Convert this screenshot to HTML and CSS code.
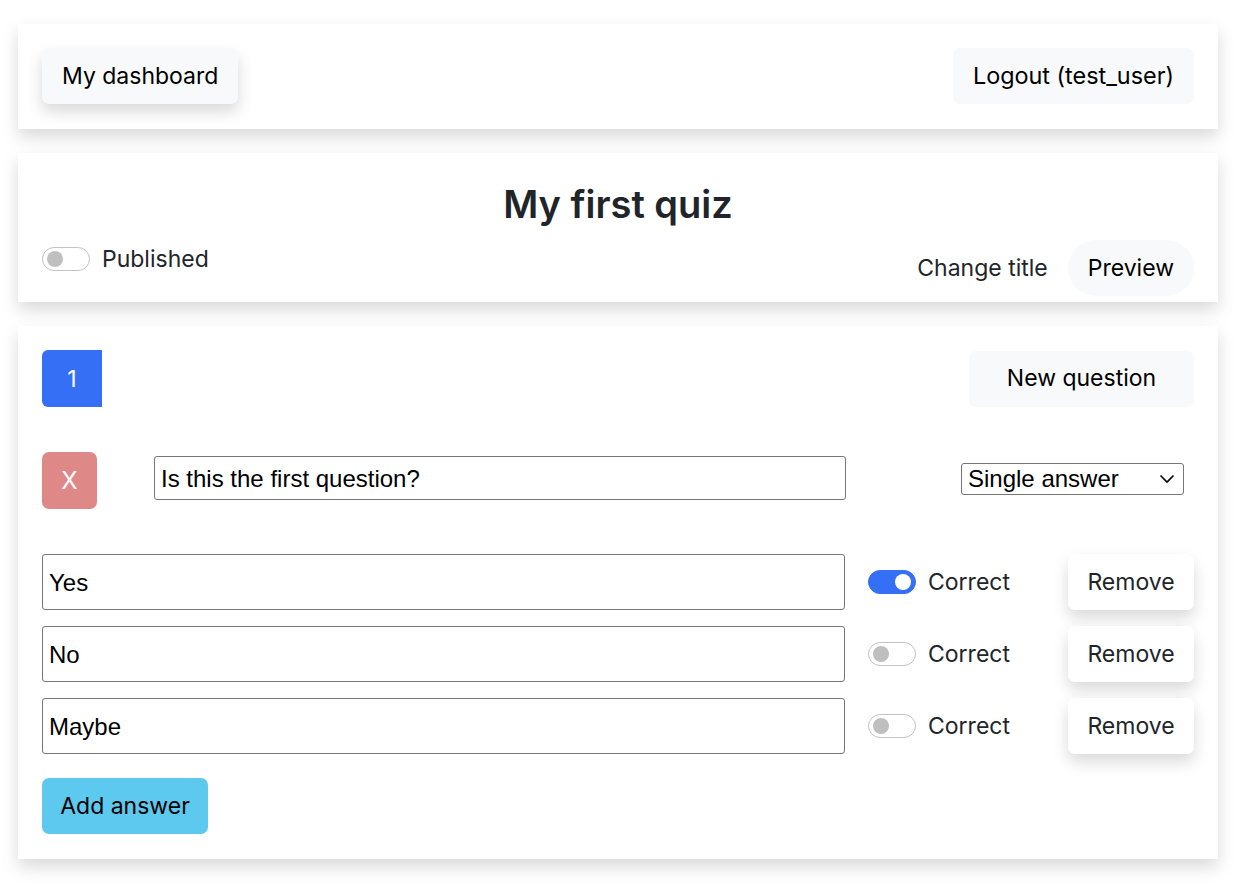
FILE: index.html
```html
<!DOCTYPE html>
<html lang="en">
<head>
<meta charset="utf-8">
<title>Quiz editor</title>
<link rel="stylesheet" href="styles.css">
</head>
<body>
<div class="page">
  <nav class="card nav">
    <button class="btn btn-light btn-shadow">My dashboard</button>
    <button class="btn btn-light btn-logout">Logout (test_user)</button>
  </nav>

  <section class="card quiz-head">
    <h1 class="quiz-title">My first quiz</h1>
    <div class="quiz-row">
      <label class="switch-label">
        <span class="switch"><span class="knob"></span></span>
        <span>Published</span>
      </label>
      <div class="quiz-actions">
        <button class="btn btn-link">Change title</button>
        <button class="btn btn-light btn-pill">Preview</button>
      </div>
    </div>
  </section>

  <section class="card questions">
    <div class="q-top">
      <div class="pager"><span class="page-item active">1</span></div>
      <button class="btn btn-light btn-wide">New question</button>
    </div>

    <div class="q-row">
      <button class="btn btn-danger-soft">X</button>
      <input class="field q-input" type="text" value="Is this the first question?">
      <div class="select">Single answer
        <svg class="chev" width="16" height="10" viewBox="0 0 16 10"><path d="M1.5 1.5 L8 8 L14.5 1.5" fill="none" stroke="#000" stroke-width="1.6"/></svg>
      </div>
    </div>

    <div class="answers">
      <div class="a-row">
        <input class="field a-input" type="text" value="Yes">
        <label class="switch-label correct">
          <span class="switch on"><span class="knob"></span></span>
          <span>Correct</span>
        </label>
        <button class="btn btn-white btn-shadow">Remove</button>
      </div>
      <div class="a-row">
        <input class="field a-input" type="text" value="No">
        <label class="switch-label correct">
          <span class="switch"><span class="knob"></span></span>
          <span>Correct</span>
        </label>
        <button class="btn btn-white btn-shadow">Remove</button>
      </div>
      <div class="a-row">
        <input class="field a-input" type="text" value="Maybe">
        <label class="switch-label correct">
          <span class="switch"><span class="knob"></span></span>
          <span>Correct</span>
        </label>
        <button class="btn btn-white btn-shadow">Remove</button>
      </div>
    </div>

    <button class="btn btn-info">Add answer</button>
  </section>
</div>
</body>
</html>
```

FILE: styles.css
```css
* { box-sizing: border-box; }
html, body { margin: 0; padding: 0; background: #fff; }
body {
  font-family: Inter, "Noto Sans", sans-serif;
  color: #212529;
}
.page {
  width: 1200px;
  margin-left: 18px;
  padding: 24px 0 40px;
  display: flex;
  flex-direction: column;
  gap: 24px;
}
.card {
  background: #fff;
  box-shadow: 0 8px 16px rgba(0,0,0,0.15);
}
.btn {
  font-family: inherit;
  font-size: 23px;
  color: #000;
  border: 0;
  height: 56px;
  padding: 0 20px;
  border-radius: 7px;
  background: transparent;
  line-height: 1;
  cursor: pointer;
}
.btn-light { background: #f8f9fa; }
.btn-logout { font-size: 23.4px; }
.btn-white { background: #fff; color: #212529; }
.btn-shadow { box-shadow: 0 8px 16px rgba(0,0,0,0.15); }
.btn-link { color: #212529; background: transparent; }
.btn-pill { border-radius: 28px; }
.btn-wide { width: 225px; }
.btn-info { background: #5ec9ee; width: 166px; padding: 0; }
.btn-danger-soft { background: #df8888; color: #fff; width: 55px; height: 57px; padding: 0; font-size: 24px; }

.nav {
  padding: 24px 24px 25px;
  display: flex;
  justify-content: space-between;
}

.quiz-head { padding: 28px 24px 6px; }
.quiz-title {
  margin: 0 0 13px;
  font-size: 38px;
  font-weight: 600;
  line-height: 46px;
  text-align: center;
}
.quiz-row {
  display: flex;
  justify-content: space-between;
  align-items: flex-start;
}
.quiz-row > .switch-label { margin-top: 5px; }
.quiz-actions { display: flex; align-items: center; }

.switch-label {
  display: flex;
  align-items: center;
  gap: 12px;
  font-size: 23px;
  color: #212529;
}
.switch {
  width: 48px;
  height: 24px;
  border: 1px solid #c4c4c4;
  border-radius: 12px;
  background: #fff;
  display: flex;
  align-items: center;
  padding: 0 4px;
}
.switch .knob {
  width: 16px;
  height: 16px;
  border-radius: 50%;
  background: #bfbfbf;
}
.switch.on { background: #356ff5; border-color: #356ff5; justify-content: flex-end; }
.switch.on .knob { background: #fff; }

.questions { padding: 24px 24px 25px; }
.q-top {
  display: flex;
  justify-content: space-between;
  align-items: center;
}
.pager { display: flex; }
.page-item {
  width: 60px;
  height: 57px;
  display: flex;
  align-items: center;
  justify-content: center;
  font-size: 23px;
  color: #fff;
  background: #356ff5;
  border-radius: 6px 0 0 6px;
}

.q-row {
  margin-top: 45px;
  display: flex;
  align-items: center;
}
.field {
  font-family: "Liberation Sans", Arial, sans-serif;
  font-size: 24px;
  color: #000;
  border: 1px solid #767676;
  border-radius: 3px;
  padding: 2px 6px 0;
  background: #fff;
}
.q-input { width: 692px; height: 44px; margin-left: 57px; margin-bottom: 5px; }
.select {
  margin-left: 115px;
  margin-bottom: 3px;
  width: 223px;
  height: 32px;
  border: 1px solid #767676;
  border-radius: 3px;
  font-family: "Liberation Sans", Arial, sans-serif;
  font-size: 24px;
  color: #000;
  display: flex;
  align-items: center;
  justify-content: space-between;
  padding: 0 8px 0 6px;
}

.answers {
  margin-top: 45px;
  display: flex;
  flex-direction: column;
  gap: 16px;
}
.a-row { display: flex; align-items: center; }
.a-input { width: 803px; height: 56px; }
.correct { margin-left: 23px; width: 200px; }
.a-row .btn-white { width: 126px; padding: 0; }

.btn-info { margin-top: 24px; }
```
